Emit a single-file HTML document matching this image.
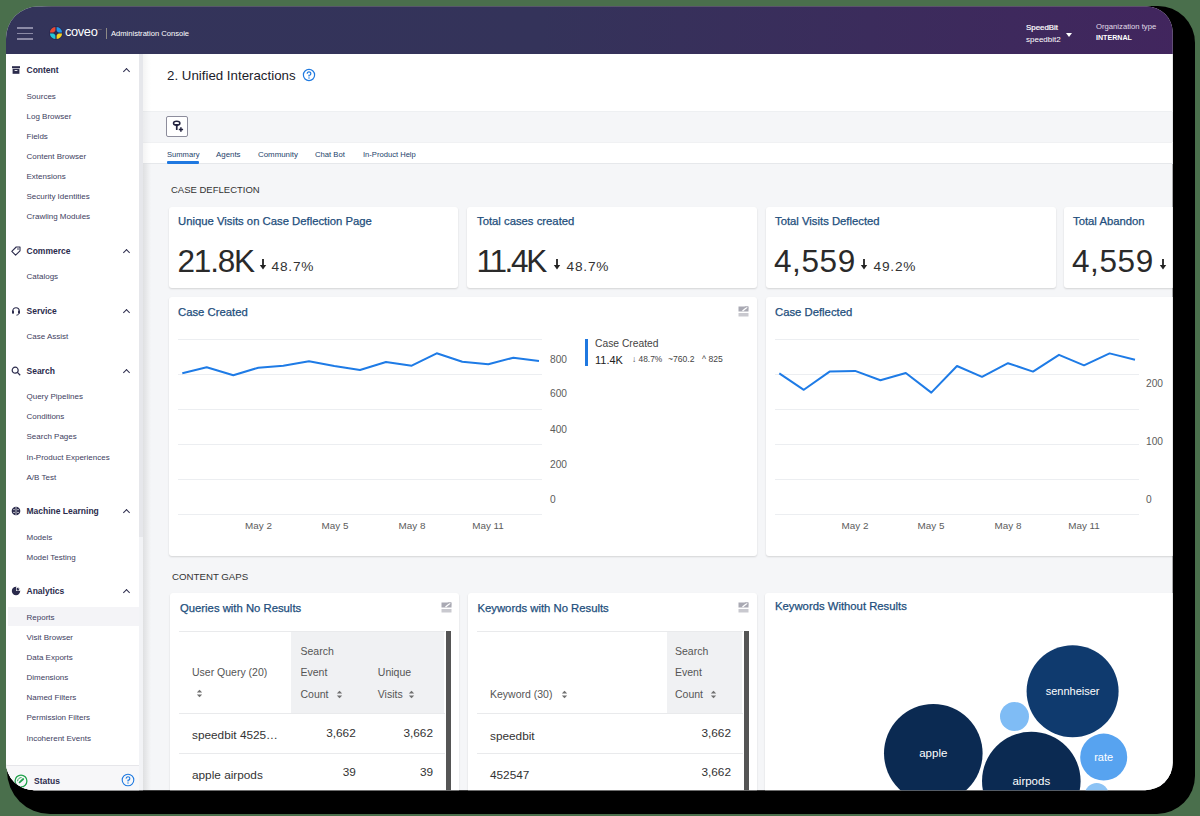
<!DOCTYPE html>
<html><head><meta charset="utf-8">
<style>
*{box-sizing:border-box;margin:0;padding:0}
html,body{width:1200px;height:816px;overflow:hidden;background:#4a6f4c;font-family:"Liberation Sans",sans-serif}
.a{position:absolute}
#shadow{position:absolute;left:7px;top:6px;width:1188px;height:807.8px;background:#000;border-radius:45px 37px 38px 43px}
#frame{position:absolute;left:0;top:0;width:1200px;height:816px;background:#f5f6f8;clip-path:inset(6.5px 27.3px 25.8px 6px round 32px 26px 27.5px 28px)}
#hdr{position:absolute;left:0;top:0;width:1200px;height:53.5px;background:linear-gradient(90deg,#33345a 0%,#34335a 45%,#42255e 100%)}
.t{position:absolute;white-space:nowrap;line-height:1}
#side{position:absolute;left:0;top:53.5px;width:139px;height:763px;background:#fff}
.sh{font-weight:bold;font-size:8.5px;color:#2b2b4c}
.si{font-size:8px;color:#40405e}
.chev{position:absolute;width:5px;height:5px;border-left:1.3px solid #2b2b4c;border-top:1.3px solid #2b2b4c;transform:rotate(45deg)}
.card{position:absolute;background:#fff;border-radius:3px;box-shadow:0 1px 2px rgba(0,0,0,.14)}
.ct{font-size:11.3px;color:#224e7c;-webkit-text-stroke:0.25px #224e7c}
.big{font-size:31.5px;color:#2a2a2a}
.pct{font-size:13.7px;color:#333;letter-spacing:0.8px}
.grid{position:absolute;height:1px;background:#eceef1}
.yl{font-size:10.2px;color:#5c5c5c}
.xl{font-size:9.9px;color:#5c5c5c}
.th{font-size:10.5px;color:#555}
.td{font-size:11.8px;color:#333}
</style></head><body>
<div id="shadow"></div>
<div id="frame">
  <!-- HEADER -->
  <div id="hdr"></div>
  <div class="a" style="left:17px;top:27.3px;width:16px;height:1.5px;background:#8b8aa6"></div>
  <div class="a" style="left:17px;top:32.8px;width:16px;height:1.5px;background:#8b8aa6"></div>
  <div class="a" style="left:17px;top:38.3px;width:16px;height:1.5px;background:#8b8aa6"></div>
  <svg class="a" style="left:49px;top:26px" width="14" height="14" viewBox="0 0 14 14">
    <circle cx="7" cy="7" r="7" fill="#2a2850"/>
    <path d="M6.4 6.4 L6.4 0.9 A6.2 6.2 0 0 0 0.9 6.4 Z" fill="#e84a34"/>
    <path d="M7.6 6.4 L13.1 6.4 A6.2 6.2 0 0 0 7.6 0.9 Z" fill="#2196e8"/>
    <path d="M6.4 7.6 L0.9 7.6 A6.2 6.2 0 0 0 6.4 13.1 Z" fill="#22c6d6"/>
    <path d="M7.6 7.6 L7.6 13.1 A6.2 6.2 0 0 0 13.1 7.6 Z" fill="#f4d11c"/>
    <path d="M7 4.2 L9.8 7 L7 9.8 L4.2 7 Z" fill="#2a2850"/>
  </svg>
  <div class="t" style="left:65px;top:25.9px;font-size:12.8px;color:#fff;letter-spacing:-0.35px">coveo</div>
  <div class="t" style="left:98px;top:29px;font-size:2.5px;color:#aaa">TM</div>
  <div class="a" style="left:105.8px;top:28px;width:1px;height:11px;background:#8e8a86"></div>
  <div class="t" style="left:111px;top:29.7px;font-size:7.6px;color:#fff">Administration Console</div>
  <div class="t" style="left:1026px;top:23.8px;font-size:7.9px;color:#fff;-webkit-text-stroke:0.2px #fff">SpeedBit</div>
  <div class="t" style="left:1026px;top:36px;font-size:8px;color:#fff">speedbit2</div>
  <div class="a" style="left:1066px;top:33px;width:0;height:0;border-left:3px solid transparent;border-right:3px solid transparent;border-top:4px solid #fff"></div>
  <div class="t" style="left:1096px;top:22.8px;font-size:7.7px;color:#e0dde8">Organization type</div>
  <div class="t" style="left:1096px;top:35.1px;font-size:7.1px;color:#fff;font-weight:bold">INTERNAL</div>

  <!-- SIDEBAR -->
  <div id="side"></div>
  <div class="a" style="left:139px;top:53.5px;width:4px;height:484px;background:#e6e7eb"></div>
  <div class="a" style="left:139px;top:537px;width:4px;height:260px;background:#f2f3f6"></div>
  <div class="a" style="left:143px;top:53.5px;width:8px;height:763px;background:linear-gradient(90deg,rgba(0,0,0,.05),rgba(0,0,0,0))"></div>
  <div class="a" style="left:8px;top:606.8px;width:131px;height:19.4px;background:#f4f4f7"></div>
  <div class="t sh" style="left:26.5px;top:65.9px">Content</div>
  <div class="chev" style="left:123.5px;top:68.5px"></div>
  <div class="t sh" style="left:26.5px;top:246.9px">Commerce</div>
  <div class="chev" style="left:123.5px;top:249.5px"></div>
  <div class="t sh" style="left:26.5px;top:306.9px">Service</div>
  <div class="chev" style="left:123.5px;top:309.5px"></div>
  <div class="t sh" style="left:26.5px;top:366.9px">Search</div>
  <div class="chev" style="left:123.5px;top:369.5px"></div>
  <div class="t sh" style="left:26.5px;top:506.9px">Machine Learning</div>
  <div class="chev" style="left:123.5px;top:509.5px"></div>
  <div class="t sh" style="left:26.5px;top:586.9px">Analytics</div>
  <div class="chev" style="left:123.5px;top:589.5px"></div>
  <div class="t si" style="left:26.5px;top:93.2px">Sources</div>
  <div class="t si" style="left:26.5px;top:113.2px">Log Browser</div>
  <div class="t si" style="left:26.5px;top:133.2px">Fields</div>
  <div class="t si" style="left:26.5px;top:153.2px">Content Browser</div>
  <div class="t si" style="left:26.5px;top:173.2px">Extensions</div>
  <div class="t si" style="left:26.5px;top:193.2px">Security Identities</div>
  <div class="t si" style="left:26.5px;top:213.2px">Crawling Modules</div>
  <div class="t si" style="left:26.5px;top:273.1px">Catalogs</div>
  <div class="t si" style="left:26.5px;top:333.1px">Case Assist</div>
  <div class="t si" style="left:26.5px;top:393.1px">Query Pipelines</div>
  <div class="t si" style="left:26.5px;top:413.1px">Conditions</div>
  <div class="t si" style="left:26.5px;top:433.1px">Search Pages</div>
  <div class="t si" style="left:26.5px;top:453.6px">In-Product Experiences</div>
  <div class="t si" style="left:26.5px;top:474.1px">A/B Test</div>
  <div class="t si" style="left:26.5px;top:533.6px">Models</div>
  <div class="t si" style="left:26.5px;top:553.6px">Model Testing</div>
  <div class="t si" style="left:26.5px;top:613.6px">Reports</div>
  <div class="t si" style="left:26.5px;top:633.6px">Visit Browser</div>
  <div class="t si" style="left:26.5px;top:654.1px">Data Exports</div>
  <div class="t si" style="left:26.5px;top:674.1px">Dimensions</div>
  <div class="t si" style="left:26.5px;top:694.1px">Named Filters</div>
  <div class="t si" style="left:26.5px;top:714.1px">Permission Filters</div>
  <div class="t si" style="left:26.5px;top:734.6px">Incoherent Events</div>

  <svg class="a" style="left:11px;top:65px" width="10" height="10" viewBox="0 0 10 10"><rect x="1" y="1.2" width="8" height="2" fill="#2b2b4c"/><rect x="1.6" y="3.8" width="6.8" height="5" fill="#2b2b4c"/><rect x="3.6" y="5" width="2.8" height="0.9" fill="#fff"/></svg>
  <svg class="a" style="left:11px;top:246px" width="10" height="10" viewBox="0 0 10 10"><path d="M5.2 1 L9 1 L9 4.8 L4.6 9.2 L0.8 5.4 Z" fill="none" stroke="#2b2b4c" stroke-width="1.1" stroke-linejoin="round"/><circle cx="7" cy="3" r="0.8" fill="#2b2b4c"/></svg>
  <svg class="a" style="left:11px;top:306px" width="10" height="10" viewBox="0 0 10 10"><path d="M1.8 6 L1.8 5 A3.2 3.2 0 0 1 8.2 5 L8.2 6" fill="none" stroke="#2b2b4c" stroke-width="1.1"/><rect x="1" y="4.6" width="2" height="3.2" rx="0.8" fill="#2b2b4c"/><rect x="7" y="4.6" width="2" height="3.2" rx="0.8" fill="#2b2b4c"/><path d="M8 7.5 Q7.6 9.2 5.4 9.2" fill="none" stroke="#2b2b4c" stroke-width="0.9"/></svg>
  <svg class="a" style="left:11px;top:366px" width="10" height="10" viewBox="0 0 10 10"><circle cx="4.2" cy="4.2" r="3" fill="none" stroke="#2b2b4c" stroke-width="1.2"/><path d="M6.4 6.4 L9.2 9.2" stroke="#2b2b4c" stroke-width="1.3"/></svg>
  <svg class="a" style="left:11px;top:506px" width="10" height="10" viewBox="0 0 10 10"><circle cx="5" cy="5" r="4.3" fill="#2b2b4c"/><path d="M5 1 L5 9" stroke="#fff" stroke-width="0.7"/><circle cx="3" cy="3.6" r="0.7" fill="#fff"/><circle cx="7" cy="3.6" r="0.7" fill="#fff"/><circle cx="3" cy="6.4" r="0.7" fill="#fff"/><circle cx="7" cy="6.4" r="0.7" fill="#fff"/></svg>
  <svg class="a" style="left:11px;top:586px" width="10" height="10" viewBox="0 0 10 10"><circle cx="5" cy="5" r="4.2" fill="#2b2b4c"/><path d="M5 5 L5 0.8 A4.2 4.2 0 0 1 9.2 5 Z" fill="#fff"/><path d="M5.6 4.4 L5.6 1.6 A3.2 3.2 0 0 1 8.4 4.4 Z" fill="#2b2b4c"/></svg>
  <div class="a" style="left:6px;top:765px;width:133px;height:1px;background:#e6e6ea"></div>
  <div class="a" style="left:6px;top:766px;width:133px;height:30px;background:#f7f7f9"></div>
  <svg class="a" style="left:14px;top:773.5px" width="14" height="14" viewBox="0 0 14 14"><circle cx="7" cy="7" r="5.9" fill="none" stroke="#22a34d" stroke-width="1.3"/><path d="M5.6 8.4 L9.2 5" stroke="#22a34d" stroke-width="1.8" stroke-linecap="round"/><path d="M3.6 7.2 A3.6 3.6 0 0 1 7.6 3.6" fill="none" stroke="#22a34d" stroke-width="0.9"/></svg>
  <div class="t sh" style="left:34px;top:777.1px">Status</div>
  <svg class="a" style="left:121px;top:773px" width="14" height="14" viewBox="0 0 14 14"><circle cx="7" cy="7" r="5.8" fill="none" stroke="#1f7ae0" stroke-width="1.1"/><path d="M5.2 5.6 A1.8 1.8 0 1 1 7 7.3 L7 8.4" fill="none" stroke="#1f7ae0" stroke-width="1.1"/><circle cx="7" cy="10" r="0.7" fill="#1f7ae0"/></svg>

  <!-- MAIN -->
  <div class="a" style="left:143px;top:53.5px;width:1060px;height:57.5px;background:#fff"></div>
  <div class="a" style="left:143px;top:111px;width:1060px;height:31px;background:#f5f6f8;border-top:1px solid #eef0f2"></div>
  <div class="a" style="left:143px;top:142px;width:1060px;height:21.8px;background:#fff;border-top:1px solid #f0f1f3;border-bottom:1px solid #e6e8eb"></div>
  <div class="a" style="left:143px;top:53.5px;width:8px;height:763px;background:linear-gradient(90deg,rgba(0,0,0,.045),rgba(0,0,0,0))"></div>
  <div class="t" style="left:167px;top:68.6px;font-size:13.3px;color:#1c1c2a">2. Unified Interactions</div>
  <svg class="a" style="left:302px;top:68px" width="14" height="14" viewBox="0 0 14 14"><circle cx="7" cy="7" r="5.6" fill="none" stroke="#1f7ae0" stroke-width="1.2"/><path d="M5.2 5.7 A1.8 1.8 0 1 1 7 7.4 L7 8.5" fill="none" stroke="#1f7ae0" stroke-width="1.2"/><circle cx="7" cy="10.1" r="0.75" fill="#1f7ae0"/></svg>
  <div class="a" style="left:166px;top:116px;width:22px;height:21px;background:#fff;border:1px solid #8d8d9c;border-radius:2px"></div>
  <svg class="a" style="left:170px;top:119px" width="16" height="16" viewBox="0 0 16 16"><ellipse cx="6.7" cy="4.2" rx="3.2" ry="1.9" fill="none" stroke="#23233f" stroke-width="1.5"/><path d="M4 5 L6.7 8 L9.4 5" fill="#23233f"/><rect x="5.9" y="6.5" width="1.7" height="4.5" rx="0.6" fill="#23233f"/><path d="M10.9 8.3 L10.9 12.7 M8.8 10.5 L13.1 10.5" stroke="#23233f" stroke-width="1.5"/></svg>
  <div class="t" style="left:167px;top:151px;font-size:7.6px;color:#1d3f6b">Summary</div>
  <div class="t" style="left:216px;top:151px;font-size:7.9px;color:#1d3f6b">Agents</div>
  <div class="t" style="left:258px;top:151px;font-size:7.9px;color:#1d3f6b">Community</div>
  <div class="t" style="left:315px;top:151px;font-size:7.7px;color:#1d3f6b">Chat Bot</div>
  <div class="t" style="left:363px;top:151px;font-size:7.6px;color:#1d3f6b">In-Product Help</div>
  <div class="a" style="left:167px;top:161.2px;width:32px;height:2.5px;background:#1f78e0;border-radius:1px"></div>
  <div class="t" style="left:171px;top:185.4px;font-size:9.5px;color:#333">CASE DEFLECTION</div>

  <!-- KPI CARDS -->
  <div class="card" style="left:168.5px;top:206.7px;width:289.5px;height:81.3px"></div>
  <div class="card" style="left:467px;top:206.7px;width:290px;height:81.3px"></div>
  <div class="card" style="left:766px;top:206.7px;width:290px;height:81.3px"></div>
  <div class="card" style="left:1064px;top:206.7px;width:290px;height:81.3px"></div>
  <div class="t ct" style="left:178px;top:216.3px">Unique Visits on Case Deflection Page</div>
  <div class="t ct" style="left:477px;top:216.3px">Total cases created</div>
  <div class="t ct" style="left:775px;top:216.3px">Total Visits Deflected</div>
  <div class="t ct" style="left:1073px;top:216.3px">Total Abandon</div>
  <div class="t big" style="left:177.5px;top:245.9px;letter-spacing:-1.2px">21.8K</div>
  <div class="t big" style="left:476.5px;top:245.9px;letter-spacing:-2.3px">11.4K</div>
  <div class="t big" style="left:774px;top:245.9px;letter-spacing:0.6px">4,559</div>
  <div class="t big" style="left:1072px;top:245.9px;letter-spacing:0.6px">4,559</div>
  <svg class="a" style="left:259px;top:259.3px" width="8" height="11" viewBox="0 0 8 11"><rect x="3.1" y="0" width="1.8" height="7" fill="#222"/><path d="M0.8 6 L7.2 6 L4 10.6 Z" fill="#222"/></svg>
  <div class="t pct" style="left:271.5px;top:260px">48.7%</div>
  <svg class="a" style="left:552.5px;top:259.3px" width="8" height="11" viewBox="0 0 8 11"><rect x="3.1" y="0" width="1.8" height="7" fill="#222"/><path d="M0.8 6 L7.2 6 L4 10.6 Z" fill="#222"/></svg>
  <div class="t pct" style="left:566.5px;top:260px">48.7%</div>
  <svg class="a" style="left:860px;top:259.3px" width="8" height="11" viewBox="0 0 8 11"><rect x="3.1" y="0" width="1.8" height="7" fill="#222"/><path d="M0.8 6 L7.2 6 L4 10.6 Z" fill="#222"/></svg>
  <div class="t pct" style="left:873.5px;top:260px">49.2%</div>
  <svg class="a" style="left:1159px;top:259.3px" width="8" height="11" viewBox="0 0 8 11"><rect x="3.1" y="0" width="1.8" height="7" fill="#222"/><path d="M0.8 6 L7.2 6 L4 10.6 Z" fill="#222"/></svg>

  <!-- CHART CARDS -->
  <div class="card" style="left:168.5px;top:297px;width:588.5px;height:259px"></div>
  <div class="card" style="left:765.5px;top:297px;width:500px;height:259px"></div>
  <div class="t ct" style="left:178px;top:306.5px">Case Created</div>
  <div class="t ct" style="left:775px;top:306.5px">Case Deflected</div>
  <svg class="a" style="left:738px;top:305.5px" width="11" height="11" viewBox="0 0 11 11"><rect x="0.5" y="0.5" width="10" height="5" fill="#a9a9b3"/><path d="M4.5 5 L9.8 0.8" stroke="#fff" stroke-width="1.3"/><path d="M6.8 0.9 L9.9 0.7 L9.7 3.6" fill="none" stroke="#a9a9b3" stroke-width="0.9"/><rect x="0.5" y="7" width="10" height="3.5" fill="#c9c9cf"/></svg>
  <div class="grid" style="left:178px;top:338.5px;width:364px"></div>
  <div class="grid" style="left:775px;top:338.5px;width:364px"></div>
  <div class="grid" style="left:178px;top:373.5px;width:364px"></div>
  <div class="grid" style="left:775px;top:373.5px;width:364px"></div>
  <div class="grid" style="left:178px;top:408.5px;width:364px"></div>
  <div class="grid" style="left:775px;top:408.5px;width:364px"></div>
  <div class="grid" style="left:178px;top:443.5px;width:364px"></div>
  <div class="grid" style="left:775px;top:443.5px;width:364px"></div>
  <div class="grid" style="left:178px;top:478.5px;width:364px"></div>
  <div class="grid" style="left:775px;top:478.5px;width:364px"></div>
  <div class="grid" style="left:178px;top:513.5px;width:364px"></div>
  <div class="grid" style="left:775px;top:513.5px;width:364px"></div>
  <div class="t yl" style="left:550px;top:354.6px">800</div>
  <div class="t yl" style="left:550px;top:389.3px">600</div>
  <div class="t yl" style="left:550px;top:424.8px">400</div>
  <div class="t yl" style="left:550px;top:459.8px">200</div>
  <div class="t yl" style="left:550px;top:494.8px">0</div>
  <div class="t yl" style="left:1146px;top:379.0px">200</div>
  <div class="t yl" style="left:1146px;top:436.8px">100</div>
  <div class="t yl" style="left:1146px;top:495.3px">0</div>
  <div class="t xl" style="left:198.5px;width:120px;text-align:center;top:521.2px">May 2</div>
  <div class="t xl" style="left:275px;width:120px;text-align:center;top:521.2px">May 5</div>
  <div class="t xl" style="left:352px;width:120px;text-align:center;top:521.2px">May 8</div>
  <div class="t xl" style="left:428px;width:120px;text-align:center;top:521.2px">May 11</div>
  <div class="t xl" style="left:795px;width:120px;text-align:center;top:521.2px">May 2</div>
  <div class="t xl" style="left:871px;width:120px;text-align:center;top:521.2px">May 5</div>
  <div class="t xl" style="left:948px;width:120px;text-align:center;top:521.2px">May 8</div>
  <div class="t xl" style="left:1024px;width:120px;text-align:center;top:521.2px">May 11</div>

  <svg class="a" style="left:0;top:0" width="1200" height="816"><polyline points="182.3,373.3 206.7,367.3 233.3,375.3 258.3,367.7 283.3,365.7 309,361.3 334.3,366 360,370 386,362 411.7,365.7 436.7,353.3 462.3,361.7 488.3,364.3 513.3,357.7 539,361" fill="none" stroke="#1e7be6" stroke-width="2" stroke-linejoin="round"/><polyline points="779.3,373.3 803.8,389.8 829.6,371.6 855.1,370.9 880.4,380.3 905.8,373 931.3,392.6 957,366 982,376.8 1008,363.2 1033,371.6 1059,354.8 1084,365.3 1109.6,353.4 1135,359.7" fill="none" stroke="#1e7be6" stroke-width="2" stroke-linejoin="round"/></svg>
  <div class="a" style="left:585px;top:339px;width:2.5px;height:27px;background:#1f78e0"></div>
  <div class="t" style="left:595px;top:339px;font-size:10.3px;color:#444">Case Created</div>
  <div class="t" style="left:595px;top:354.7px;font-size:11px;color:#222">11.4K</div>
  <div class="t" style="left:632px;top:355px;font-size:8.4px;color:#444">&#8595; 48.7%</div>
  <div class="t" style="left:668px;top:355px;font-size:8.6px;color:#444">~760.2</div>
  <div class="t" style="left:702px;top:355px;font-size:8.6px;color:#444">^ 825</div>
  <div class="t" style="left:172px;top:572.4px;font-size:9.7px;color:#333">CONTENT GAPS</div>

  <!-- TABLE CARDS -->
  <div class="card" style="left:170px;top:593px;width:289px;height:230px"></div>
  <div class="card" style="left:467.5px;top:593px;width:289.5px;height:230px"></div>
  <div class="card" style="left:765px;top:593px;width:500px;height:230px"></div>
  <div class="t ct" style="left:180px;top:602.9px">Queries with No Results</div>
  <div class="t ct" style="left:477.5px;top:602.9px">Keywords with No Results</div>
  <div class="t ct" style="left:775px;top:601.3px">Keywords Without Results</div>
  <svg class="a" style="left:441px;top:602px" width="11" height="11" viewBox="0 0 11 11"><rect x="0.5" y="0.5" width="10" height="5" fill="#a9a9b3"/><path d="M4.5 5 L9.8 0.8" stroke="#fff" stroke-width="1.3"/><path d="M6.8 0.9 L9.9 0.7 L9.7 3.6" fill="none" stroke="#a9a9b3" stroke-width="0.9"/><rect x="0.5" y="7" width="10" height="3.5" fill="#c9c9cf"/></svg>
  <svg class="a" style="left:738px;top:602px" width="11" height="11" viewBox="0 0 11 11"><rect x="0.5" y="0.5" width="10" height="5" fill="#a9a9b3"/><path d="M4.5 5 L9.8 0.8" stroke="#fff" stroke-width="1.3"/><path d="M6.8 0.9 L9.9 0.7 L9.7 3.6" fill="none" stroke="#a9a9b3" stroke-width="0.9"/><rect x="0.5" y="7" width="10" height="3.5" fill="#c9c9cf"/></svg>
  <div class="a" style="left:179px;top:631px;width:266px;height:1px;background:#e9eaec"></div>
  <div class="a" style="left:291.25px;top:631.5px;width:152.5px;height:81.75px;background:#f0f1f3"></div>
  <div class="a" style="left:179px;top:713px;width:266px;height:1px;background:#e9eaec"></div>
  <div class="a" style="left:179px;top:753px;width:266px;height:1px;background:#e9eaec"></div>
  <div class="a" style="left:445.75px;top:631px;width:5px;height:170px;background:#555"></div>
  <div class="t th" style="left:192px;top:666.95px">User Query (20)</div>
  <svg class="a" style="left:196px;top:689.0px" width="7" height="9" viewBox="0 0 7 9"><path d="M0.8 3.6 L3.5 0.8 L6.2 3.6 Z" fill="#707070"/><path d="M0.8 5.4 L3.5 8.2 L6.2 5.4 Z" fill="#707070"/></svg>
  <div class="t th" style="left:300.5px;top:645.95px">Search</div>
  <div class="t th" style="left:300.5px;top:666.95px">Event</div>
  <div class="t th" style="left:300.5px;top:688.70px">Count</div>
  <svg class="a" style="left:335.8px;top:689.5px" width="7" height="9" viewBox="0 0 7 9"><path d="M0.8 3.6 L3.5 0.8 L6.2 3.6 Z" fill="#707070"/><path d="M0.8 5.4 L3.5 8.2 L6.2 5.4 Z" fill="#707070"/></svg>
  <div class="t th" style="left:377.8px;top:666.95px">Unique</div>
  <div class="t th" style="left:377.8px;top:688.70px">Visits</div>
  <svg class="a" style="left:408px;top:689.5px" width="7" height="9" viewBox="0 0 7 9"><path d="M0.8 3.6 L3.5 0.8 L6.2 3.6 Z" fill="#707070"/><path d="M0.8 5.4 L3.5 8.2 L6.2 5.4 Z" fill="#707070"/></svg>
  <div class="t td" style="left:192px;top:730.30px">speedbit 4525…</div>
  <div class="t td" style="left:255.75px;width:100px;text-align:right;top:727.80px">3,662</div>
  <div class="t td" style="left:333px;width:100px;text-align:right;top:727.80px">3,662</div>
  <div class="t td" style="left:192px;top:770.30px">apple airpods</div>
  <div class="t td" style="left:255.75px;width:100px;text-align:right;top:767.30px">39</div>
  <div class="t td" style="left:333px;width:100px;text-align:right;top:767.30px">39</div>
  <div class="a" style="left:477px;top:631px;width:266px;height:1px;background:#e9eaec"></div>
  <div class="a" style="left:667px;top:631.5px;width:75px;height:81.75px;background:#f0f1f3"></div>
  <div class="a" style="left:477px;top:713px;width:266px;height:1px;background:#e9eaec"></div>
  <div class="a" style="left:477px;top:753px;width:266px;height:1px;background:#e9eaec"></div>
  <div class="a" style="left:744px;top:631px;width:4.5px;height:170px;background:#555"></div>
  <div class="t th" style="left:490px;top:688.95px">Keyword (30)</div>
  <svg class="a" style="left:560.5px;top:689.5px" width="7" height="9" viewBox="0 0 7 9"><path d="M0.8 3.6 L3.5 0.8 L6.2 3.6 Z" fill="#707070"/><path d="M0.8 5.4 L3.5 8.2 L6.2 5.4 Z" fill="#707070"/></svg>
  <div class="t th" style="left:675px;top:645.95px">Search</div>
  <div class="t th" style="left:675px;top:666.95px">Event</div>
  <div class="t th" style="left:675px;top:688.95px">Count</div>
  <svg class="a" style="left:710px;top:689.5px" width="7" height="9" viewBox="0 0 7 9"><path d="M0.8 3.6 L3.5 0.8 L6.2 3.6 Z" fill="#707070"/><path d="M0.8 5.4 L3.5 8.2 L6.2 5.4 Z" fill="#707070"/></svg>
  <div class="t td" style="left:490px;top:731.30px">speedbit</div>
  <div class="t td" style="left:631px;width:100px;text-align:right;top:727.80px">3,662</div>
  <div class="t td" style="left:490px;top:770.30px">452547</div>
  <div class="t td" style="left:631px;width:100px;text-align:right;top:767.30px">3,662</div>
  <svg class="a" style="left:0;top:0" width="1200" height="816">
    <circle cx="933.3" cy="753.3" r="49.3" fill="#0b2a52"/>
    <circle cx="1031.3" cy="781" r="49.3" fill="#0b2a52"/>
    <circle cx="1072.6" cy="691.3" r="46" fill="#0f3a6e"/>
    <circle cx="1014.5" cy="716.5" r="14.5" fill="#7fbcf5"/>
    <circle cx="1103.7" cy="757.1" r="23.5" fill="#57a3f0"/>
    <circle cx="1096.7" cy="795" r="12" fill="#8cc3f5"/>
  </svg>
  <div class="t" style="left:972.6px;width:200px;text-align:center;top:686px;font-size:11px;color:#fff">sennheiser</div>
  <div class="t" style="left:833.3px;width:200px;text-align:center;top:748px;font-size:11.5px;color:#fff">apple</div>
  <div class="t" style="left:931.3px;width:200px;text-align:center;top:776px;font-size:11.5px;color:#fff">airpods</div>
  <div class="t" style="left:1003.7px;width:200px;text-align:center;top:752px;font-size:11px;color:#fff">rate</div>
</div>
</body></html>
